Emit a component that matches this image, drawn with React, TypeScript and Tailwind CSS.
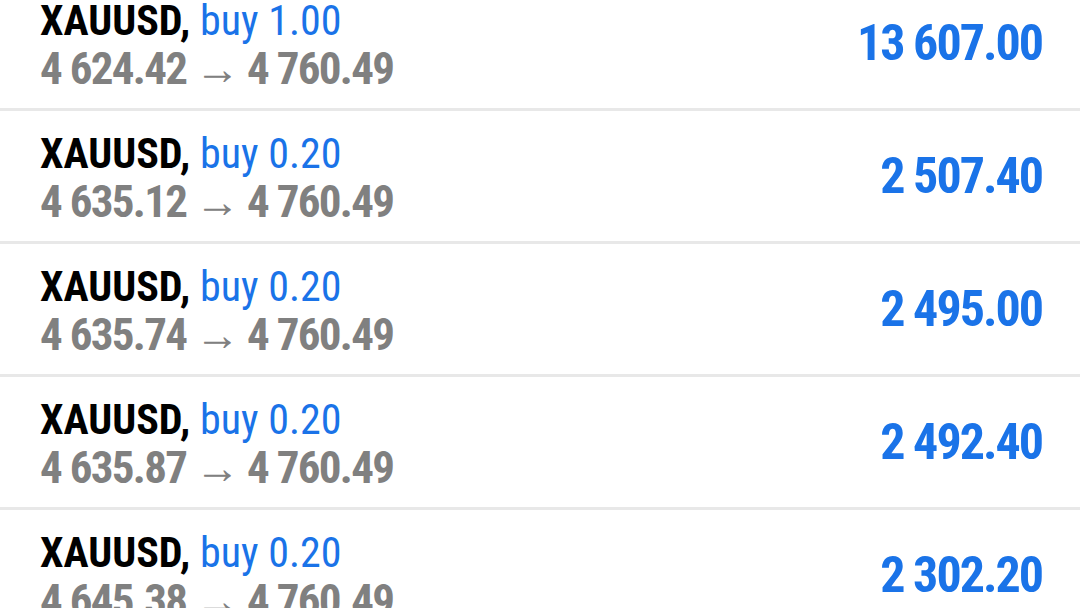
const trades = [
  { symbol: 'XAUUSD', side: 'buy', volume: '1.00', open: '4 624.42', close: '4 760.49', profit: '13 607.00' },
  { symbol: 'XAUUSD', side: 'buy', volume: '0.20', open: '4 635.12', close: '4 760.49', profit: '2 507.40' },
  { symbol: 'XAUUSD', side: 'buy', volume: '0.20', open: '4 635.74', close: '4 760.49', profit: '2 495.00' },
  { symbol: 'XAUUSD', side: 'buy', volume: '0.20', open: '4 635.87', close: '4 760.49', profit: '2 492.40' },
  { symbol: 'XAUUSD', side: 'buy', volume: '0.20', open: '4 645.38', close: '4 760.49', profit: '2 302.20' },
];

function TradeRow({ trade }: { trade: (typeof trades)[number] }) {
  return (
    <div className="flex h-[133px] items-center justify-between border-b-[3px] border-[#e8e8e8] pl-[40px] pr-[38px]">
      <div className="flex flex-col">
        <div className="h-[50px] pt-[3px] text-[42px] leading-[50px]">
          <span className="font-bold text-black">{trade.symbol},</span>{' '}
          <span className="text-[#1a73e8]">
            {trade.side} {trade.volume}
          </span>
        </div>
        <div className="h-[50px] pt-[1px] text-[45px] font-bold leading-[50px] tracking-[-1.7px] text-[#808080]">
          {trade.open} <span className="font-normal">→</span> {trade.close}
        </div>
      </div>
      <div className="text-[50px] font-bold tracking-[-2px] text-[#1a73e8]">{trade.profit}</div>
    </div>
  );
}

export default function App() {
  return (
    <div
      className="h-[608px] w-[1080px] overflow-hidden bg-white font-stretch-condensed"
      style={{ fontFamily: 'Roboto, "Liberation Sans", sans-serif' }}
    >
      <div className="-mt-[22px]">
        {trades.map((t, i) => (
          <TradeRow key={i} trade={t} />
        ))}
      </div>
    </div>
  );
}
